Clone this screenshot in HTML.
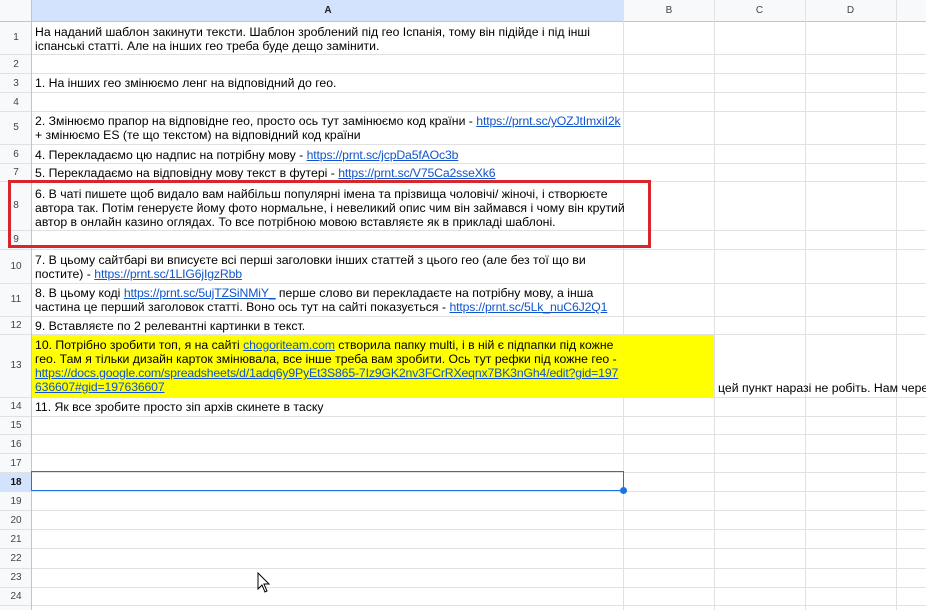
<!DOCTYPE html>
<html><head><meta charset="utf-8"><style>
body{margin:0;width:926px;height:610px;overflow:hidden;background:#fff;font-family:"Liberation Sans",Arial,sans-serif;position:relative}
.h{position:absolute;left:0;width:926px;height:1px;background:#e1e1e1}
.v{position:absolute;top:0;height:610px;width:1px;background:#e1e1e1}
.rn{position:absolute;left:0;width:32px;text-align:center;font-size:10px;color:#444}
.t{position:absolute;left:35px;font-size:12.25px;line-height:14px;color:#000;white-space:nowrap}
a{color:#1155cc;text-decoration:underline;letter-spacing:-0.15px}
.ch{position:absolute;top:0;height:21px;line-height:21px;text-align:center;font-size:10px;color:#444}
</style></head><body>
<div style="position:absolute;left:0;top:0;width:32px;height:610px;background:#f8f9fa"></div>
<div style="position:absolute;left:0;top:0;width:926px;height:21px;background:#f8f9fa"></div>
<div style="position:absolute;left:32px;top:0;width:592px;height:21px;background:#d3e3fd"></div>
<div style="position:absolute;left:0;top:472px;width:32px;height:19px;background:#d3e3fd"></div>
<div style="position:absolute;left:32px;top:334px;width:682px;height:63px;background:#ffff00"></div>

<div class="h" style="top:21px;background:#c4c4c4"></div>
<div class="h" style="top:54px"></div><div class="h" style="top:73px"></div><div class="h" style="top:92px"></div>
<div class="h" style="top:111px"></div><div class="h" style="top:144px"></div><div class="h" style="top:163px"></div>
<div class="h" style="top:181px"></div><div class="h" style="top:230px"></div><div class="h" style="top:249px"></div>
<div class="h" style="top:283px"></div><div class="h" style="top:316px"></div><div class="h" style="top:334px"></div>
<div class="h" style="top:397px"></div><div class="h" style="top:416px"></div><div class="h" style="top:434px"></div>
<div class="h" style="top:453px"></div><div class="h" style="top:472px"></div><div class="h" style="top:491px"></div>
<div class="h" style="top:510px"></div><div class="h" style="top:529px"></div><div class="h" style="top:548px"></div>
<div class="h" style="top:568px"></div><div class="h" style="top:587px"></div><div class="h" style="top:605px"></div>
<div class="v" style="left:31px;background:#c4c4c4"></div>
<div class="v" style="left:623px"></div><div class="v" style="left:714px"></div>
<div class="v" style="left:805px"></div><div class="v" style="left:896px"></div>

<div class="ch" style="left:32px;width:592px;color:#222;font-weight:bold">A</div>
<div class="ch" style="left:624px;width:90px">B</div>
<div class="ch" style="left:714px;width:91px">C</div>
<div class="ch" style="left:805px;width:91px">D</div>

<div class="rn" style="top:32px">1</div><div class="rn" style="top:59px">2</div><div class="rn" style="top:78px">3</div>
<div class="rn" style="top:97px">4</div><div class="rn" style="top:122px">5</div><div class="rn" style="top:149px">6</div>
<div class="rn" style="top:167px">7</div><div class="rn" style="top:200px">8</div><div class="rn" style="top:234px">9</div>
<div class="rn" style="top:261px">10</div><div class="rn" style="top:294px">11</div><div class="rn" style="top:320px">12</div>
<div class="rn" style="top:360px">13</div><div class="rn" style="top:401px">14</div><div class="rn" style="top:420px">15</div>
<div class="rn" style="top:439px">16</div><div class="rn" style="top:458px">17</div><div class="rn" style="top:477px;font-weight:bold;color:#111">18</div>
<div class="rn" style="top:496px">19</div><div class="rn" style="top:515px">20</div><div class="rn" style="top:534px">21</div>
<div class="rn" style="top:553px">22</div><div class="rn" style="top:572px">23</div><div class="rn" style="top:591px">24</div>

<div class="t" style="top:25px">На наданий шаблон закинути тексти. Шаблон зроблений під гео Іспанія, тому він підійде і під інші<br>іспанські статті. Але на інших гео треба буде дещо замінити.</div>
<div class="t" style="top:76px">1. На інших гео змінюємо ленг на відповідний до гео.</div>
<div class="t" style="top:114px">2. Змінюємо прапор на відповідне гео, просто ось тут замінюємо код країни - <a>https://prnt.sc/yOZJtImxiI2k</a><br>+ змінюємо ES (те що текстом) на відповідний код країни</div>
<div class="t" style="top:148px">4. Перекладаємо цю надпис на потрібну мову - <a>https://prnt.sc/jcpDa5fAOc3b</a></div>
<div class="t" style="top:166px">5. Перекладаємо на відповідну мову текст в футері - <a>https://prnt.sc/V75Ca2sseXk6</a></div>
<div class="t" style="top:187px">6. В чаті пишете щоб видало вам найбільш популярні імена та прізвища чоловічі/ жіночі, і створюєте<br>автора так. Потім генеруєте йому фото нормальне, і невеликий опис чим він займався і чому він крутий<br>автор в онлайн казино оглядах. То все потрібною мовою вставляєте як в прикладі шаблоні.</div>
<div class="t" style="top:253px">7. В цьому сайтбарі ви вписуєте всі перші заголовки інших статтей з цього гео (але без тої що ви<br>постите) - <a>https://prnt.sc/1LIG6jIgzRbb</a></div>
<div class="t" style="top:286px">8. В цьому коді <a>https://prnt.sc/5ujTZSiNMiY_</a> перше слово ви перекладаєте на потрібну мову, а інша<br>частина це перший заголовок статті. Воно ось тут на сайті показується - <a>https://prnt.sc/5Lk_nuC6J2Q1</a></div>
<div class="t" style="top:319px">9. Вставляєте по 2 релевантні картинки в текст.</div>
<div class="t" style="top:338px">10. Потрібно зробити топ, я на сайті <a>chogoriteam.com</a> створила папку multi, і в ній є підпапки під кожне<br>гео. Там я тільки дизайн карток змінювала, все інше треба вам зробити. Ось тут рефки під кожне гео -<br><a>https://docs.google.com/spreadsheets/d/1adq6y9PyEt3S865-7Iz9GK2nv3FCrRXeqnx7BK3nGh4/edit?gid=197</a><br><a>636607#gid=197636607</a></div>
<div class="t" style="top:381px;left:718px">цей пункт наразі не робіть. Нам через</div>
<div class="t" style="top:400px">11. Як все зробите просто зіп архів скинете в таску</div>

<div style="position:absolute;left:8px;top:180px;width:637px;height:62px;border:3px solid #d9262c"></div>
<div style="position:absolute;left:31px;top:471px;width:591px;height:18px;border:1px solid #1a73e8"></div>
<div style="position:absolute;left:620px;top:487px;width:7px;height:7px;border-radius:50%;background:#1a73e8"></div>
<svg style="position:absolute;left:257px;top:572px" width="14" height="22" viewBox="0 0 14 22"><path d="M1 1 L1 17 L5 13 L8 20 L10 19 L7 12 L12 12 Z" fill="#fff" stroke="#000" stroke-width="1"/></svg>
</body></html>
